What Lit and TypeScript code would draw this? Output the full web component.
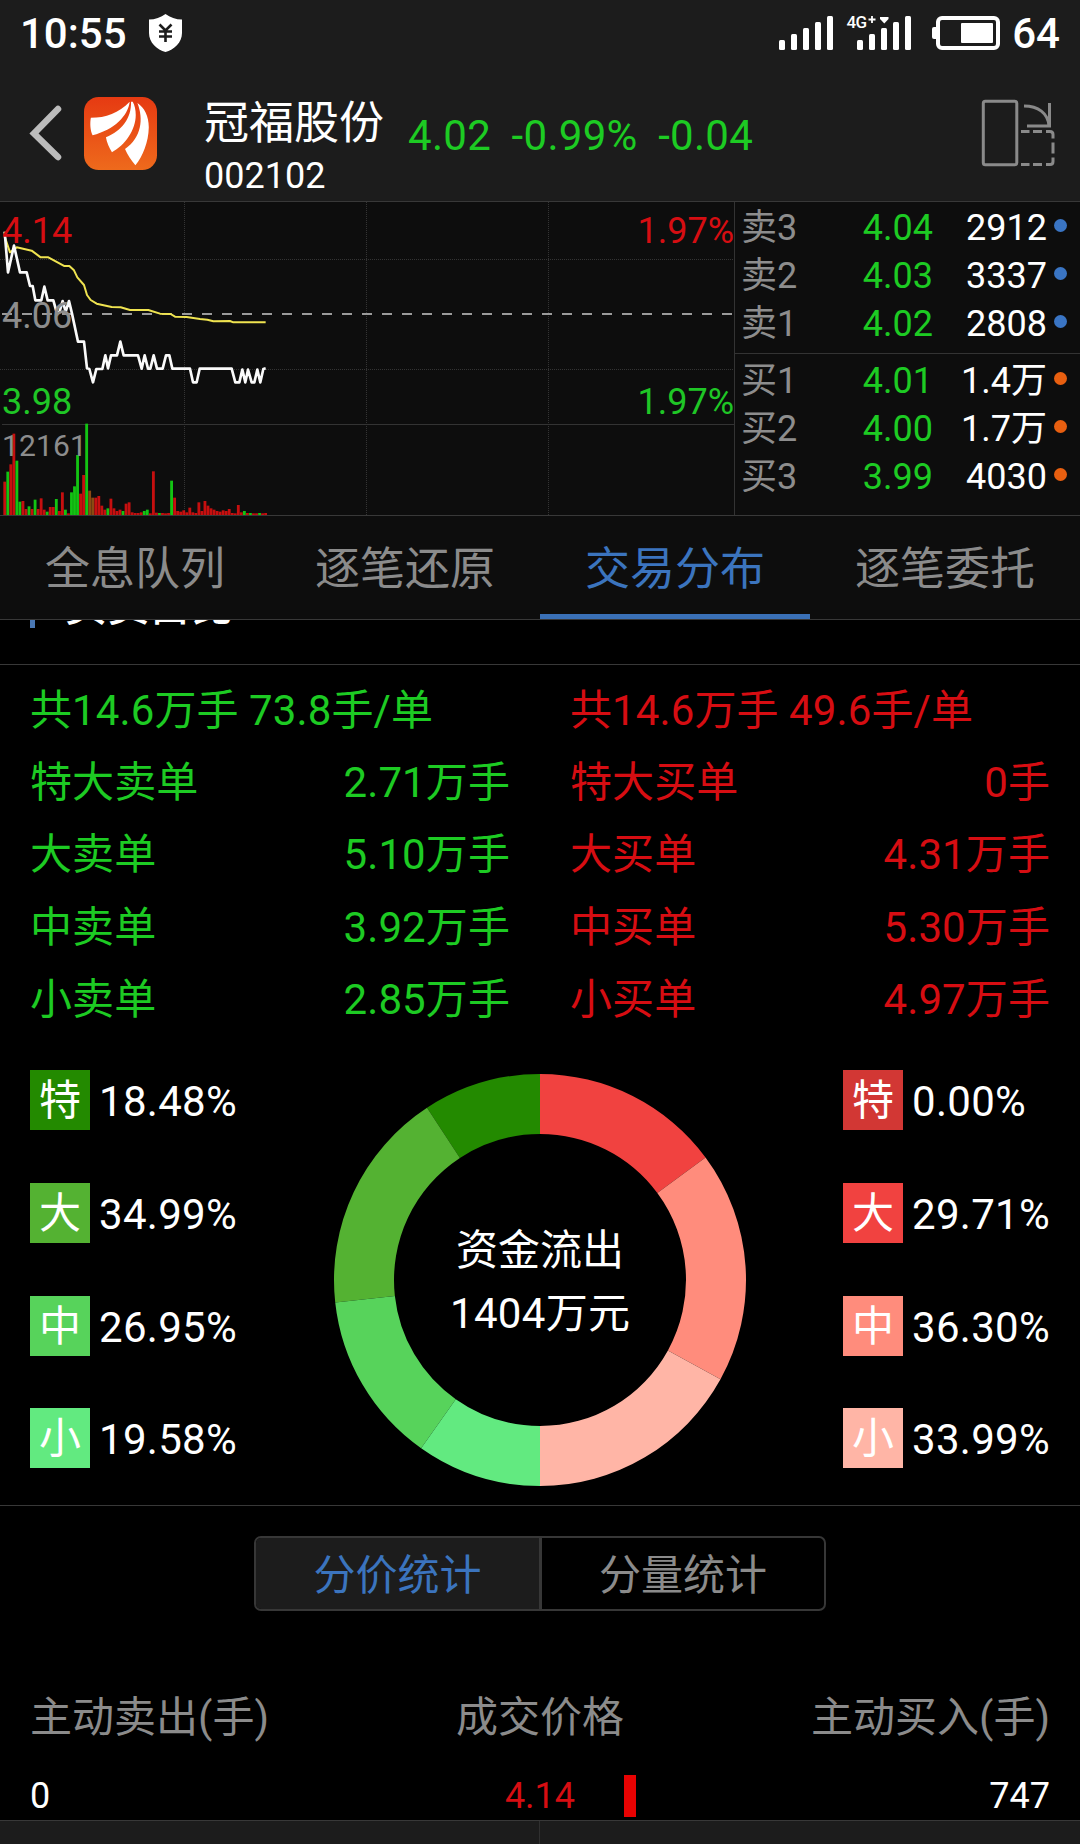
import { LitElement, html, svg, css } from "lit";
import { customElement, property } from "lit/decorators.js";
import { classMap } from "lit/directives/class-map.js";
import { styleMap } from "lit/directives/style-map.js";

const font = css`
  :host {
    display: block;
    font-family: Roboto, "Noto Sans CJK SC", sans-serif;
  }
`;

/* ---------- data ---------- */

// Chart series are in thirds of a pixel, measured from y = 195px.
const PRICE: number[][] = [
  [14, 110], [24, 232], [42, 152], [60, 232], [80, 232], [90, 273], [98, 273], [106, 316], [124, 316],
  [133, 275], [143, 316], [160, 316], [170, 352], [178, 352], [188, 318], [197, 350], [207, 318], [216, 356],
  [234, 440], [252, 440], [261, 520], [268, 522], [279, 562], [289, 522], [307, 522], [316, 481], [324, 520],
  [333, 481], [351, 481], [361, 440], [371, 481], [414, 481], [425, 521], [434, 481], [444, 521], [451, 521],
  [461, 481], [471, 521], [488, 521], [498, 481], [508, 481], [517, 521], [570, 521], [579, 562], [590, 562],
  [599, 521], [695, 521], [706, 562], [718, 562], [727, 524], [736, 562], [744, 524], [755, 562], [763, 562],
  [772, 524], [781, 562], [790, 522], [797, 520],
];

const AVERAGE: number[][] = [
  [14, 125], [30, 172], [50, 157], [95, 167], [122, 187], [145, 187], [192, 213], [208, 213], [222, 226],
  [232, 247], [252, 270], [261, 300], [272, 315], [290, 326], [335, 336], [362, 337], [390, 345], [445, 345],
  [480, 356], [512, 357], [525, 365], [560, 366], [600, 372], [622, 374], [640, 379], [690, 378], [700, 382],
  [797, 382],
];

// One bar a minute: direction letter and height.
const VOLUME =
  "r100 g130 r152 r244 g163 g40 r42 r18 g26 r18 g46 r18 r50 r16 g10 r24 r24 g48 r12 r68 g16 r5 g68 g86 g180 r64 r120 g274 m73 m52 r52 r57 r28 r16 g20 r49 r20 r12 r16 g12 r34 r38 r8 r6 r6 r8 g12 g16 r5 r131 r7 g6 r6 r5 r6 g103 r52 r12 r10 r14 r8 r22 r8 r6 r38 r12 r42 r28 r20 r16 r12 r10 r14 r12 r18 r6 r5 r30 r8 g12 r6 g6 r5 r5 g6 r5 r6".split(
    " ",
  );

const SELLS = [
  { name: "卖3", price: "4.04", count: "2912" },
  { name: "卖2", price: "4.03", count: "3337" },
  { name: "卖1", price: "4.02", count: "2808" },
];
const BUYS = [
  { name: "买1", price: "4.01", count: "1.4万" },
  { name: "买2", price: "4.00", count: "1.7万" },
  { name: "买3", price: "3.99", count: "4030" },
];

const TABS = ["全息队列", "逐笔还原", "交易分布", "逐笔委托"];

const SELL_ORDERS = [
  ["特大卖单", "2.71万手"],
  ["大卖单", "5.10万手"],
  ["中卖单", "3.92万手"],
  ["小卖单", "2.85万手"],
];
const BUY_ORDERS = [
  ["特大买单", "0手"],
  ["大买单", "4.31万手"],
  ["中买单", "5.30万手"],
  ["小买单", "4.97万手"],
];

interface Share {
  label: string;
  share: number;
  color: string;
}
const SELL_SHARES: Share[] = [
  { label: "特", share: 18.48, color: "#238a00" },
  { label: "大", share: 34.99, color: "#54b232" },
  { label: "中", share: 26.95, color: "#57d35b" },
  { label: "小", share: 19.58, color: "#62ea80" },
];
const BUY_SHARES: Share[] = [
  { label: "特", share: 0, color: "#d23734" },
  { label: "大", share: 29.71, color: "#f14240" },
  { label: "中", share: 36.3, color: "#ff8c7c" },
  { label: "小", share: 33.99, color: "#ffb5a6" },
];

/* ---------- status bar ---------- */

@customElement("status-bar")
class StatusBar extends LitElement {
  static styles = [
    font,
    css`
      .bar {
        display: flex;
        align-items: center;
        height: 66px;
        padding: 0 20px;
        color: #fff;
        font-size: 42px;
        font-weight: 500;
      }
      .clock,
      .level {
        line-height: 64px;
        padding-top: 2px;
      }
      .clock {
        width: 128px;
      }
      .icons {
        margin-left: auto;
        margin-right: 11px;
      }
      svg {
        display: block;
      }
      .net {
        font-size: 17px;
        font-weight: 500;
      }
    `,
  ];

  render() {
    const bars = (x: number) =>
      [0, 1, 2, 3, 4].map(
        (i) => svg`<rect x=${x + i * 12} y=${40 - i * 6} width="6" height=${10 + i * 6} rx="1.5"></rect>`,
      );
    return html`
      <div class="bar">
        <span class="clock">10:55</span>
        <svg width="36" height="66" viewBox="148 0 36 66">
          <path d="M165.500 14 C170 17.500 176 19.500 182 19.500 V33 C182 43 174 49.500 165.500 52 C157 49.500 149 43 149 33 V19.500 C155 19.500 161 17.500 165.500 14Z" fill="#fff"></path>
          <path d="M159.500 24.500 L165.500 30.500 L171.500 24.500 M159 31.500 H172 M159 36.500 H172 M165.500 30 V42" fill="none" stroke="#1c1c1c" stroke-width="2.600"></path>
        </svg>
        <svg class="icons" width="223" height="66" viewBox="778 0 223 66" fill="#fff">
          ${bars(779)} ${bars(857)}
          <text class="net" x="846.500" y="28" textLength="20.500">4G</text>
          <path d="M868.500 19.500 H875.500 M872 16 V23" stroke="#fff" stroke-width="1.800"></path>
          <path d="M880 17 H888.500 V19 L884.300 23.500 L880 19Z"></path>
          <rect x="938" y="18" width="60" height="30" rx="4" fill="none" stroke="#fff" stroke-width="4"></rect>
          <rect x="932" y="27" width="6" height="12" rx="2"></rect>
          <rect x="961" y="23" width="32" height="20" rx="1"></rect>
        </svg>
        <span class="level">64</span>
      </div>
    `;
  }
}

/* ---------- stock header ---------- */

@customElement("stock-header")
class StockHeader extends LitElement {
  static styles = [
    font,
    css`
      .head {
        display: flex;
        height: 135px;
        padding: 0 25px 0 28px;
        border-bottom: 1px solid #383838;
        color: #fff;
      }
      svg {
        display: block;
        flex: none;
      }
      .back {
        margin: 39px 22px 0 0;
      }
      .logo {
        margin-top: 31px;
      }
      .ident {
        width: 204px;
        padding: 31px 0 0 47px;
      }
      .name {
        font-size: 45px;
        line-height: 54px;
      }
      .code {
        font-size: 36px;
        line-height: 50px;
      }
      .quote {
        display: flex;
        gap: 20.500px;
        font-size: 42px;
        letter-spacing: 0.300px;
        line-height: 140px;
        color: #1dcb23;
      }
      .rotate {
        margin: 32px 0 0 auto;
      }
    `,
  ];

  render() {
    return html`
      <div class="head">
        <svg class="back" width="34" height="58" viewBox="28 105 34 58">
          <path d="M58 109 L34 133.500 L58 157" fill="none" stroke="#bcbcbc" stroke-width="6.500" stroke-linecap="round"></path>
        </svg>
        <svg class="logo" width="73" height="73" viewBox="192.500 36 218 218">
          <defs>
            <linearGradient id="sun" x1="0" y1="0" x2="0" y2="1">
              <stop offset="0" stop-color="#e63a12"></stop>
              <stop offset="1" stop-color="#ee6a1c"></stop>
            </linearGradient>
          </defs>
          <rect x="192.500" y="36" width="218" height="218" rx="44" fill="url(#sun)"></rect>
          <g fill="#fff">
            <path d="M213 98 C258 98 296 84 329 50 C324 92 283 134 218 150 C211 136 210 114 213 98Z"></path>
            <path d="M333 50 C334 100 306 136 258 156 C260 170 268 188 276 201 C314 181 347 136 347 90 C347 74 344 60 338 50Z"></path>
            <path d="M352 54 C371 102 364 158 315 191 C322 207 334 226 346 240 C368 212 385 172 386 126 C386 94 373 68 352 54Z"></path>
          </g>
        </svg>
        <div class="ident">
          <div class="name">冠福股份</div>
          <div class="code">002102</div>
        </div>
        <div class="quote"><span>4.02</span><span>-0.99%</span><span>-0.04</span></div>
        <svg class="rotate" width="74" height="70" viewBox="981 98 74 70" fill="none" stroke="#8a8a8a" stroke-width="3">
          <rect x="983.300" y="101.300" width="33.500" height="63.500" rx="2"></rect>
          <path d="M1024 106 C1038 106 1048 113 1049 126 M1049.500 103 V126 H1027"></path>
          <path d="M1021 131.500 h8.500 m3.500 0 h9 m4 0 h4 q3 0 3 3 v4 m0 4 v11 m0 4 v4 q0 3 -3 3 h-4 m-4 0 h-9 m-3.500 0 h-8.500"></path>
        </svg>
      </div>
    `;
  }
}

/* ---------- intraday chart ---------- */

@customElement("minute-chart")
class MinuteChart extends LitElement {
  static styles = [
    font,
    css`
      svg {
        display: block;
      }
      .label {
        font-size: 36px;
      }
      .small {
        font-size: 30px;
      }
      .right {
        text-anchor: end;
      }
      .up {
        fill: #d60d12;
      }
      .down {
        fill: #1fc626;
      }
      .flat {
        fill: #8d8d8d;
      }
    `,
  ];

  render() {
    const fills: Record<string, string> = { r: "#c60f0f", g: "#13c413", m: "#8b4a12" };
    return html`
      <svg width="734" height="313" viewBox="0 202 734 313">
        <g fill="none" stroke="#343434" stroke-dasharray="1 1">
          <path d="M184.500 202 V515 M366.500 202 V515 M548.500 202 V515"></path>
          <path d="M0 259.500 H734 M0 369.500 H734"></path>
        </g>
        <path d="M2 424.500 H734" stroke="#333"></path>
        <path d="M2 314 H734" stroke="#9a9a9a" stroke-width="2" stroke-dasharray="10 10"></path>
        <g transform="translate(0 195) scale(0.33333)">
          ${VOLUME.map((v, i) => {
            const h = Number(v.slice(1));
            return svg`<rect x=${10 + i * 9.1} y=${960 - h} width="8.500" height=${h} fill=${fills[v[0]]}></rect>`;
          })}
          <polyline points=${AVERAGE.join(" ")} fill="none" stroke="#efe350" stroke-width="6" stroke-linejoin="round"></polyline>
          <polyline points=${PRICE.join(" ")} fill="none" stroke="#fafafa" stroke-width="8" stroke-linejoin="round"></polyline>
        </g>
        <text class="label up" x="2" y="243">4.14</text>
        <text class="label flat" x="2" y="327.500">4.06</text>
        <text class="label down" x="2" y="413.500">3.98</text>
        <text class="small flat" x="2" y="455.500" textLength="84.800">12161</text>
        <text class="label up right" x="734" y="243">1.97%</text>
        <text class="label down right" x="734" y="413.500">1.97%</text>
      </svg>
    `;
  }
}

/* ---------- order book ---------- */

@customElement("order-book")
class OrderBook extends LitElement {
  static styles = [
    font,
    css`
      .book {
        height: 313px;
        border-left: 1px solid #333;
        box-sizing: border-box;
        font-size: 36px;
        line-height: 48px;
      }
      .side {
        padding-top: 2px;
      }
      .side.buy {
        padding-top: 3px;
      }
      .sell {
        height: 149px;
        border-bottom: 1px solid #333;
      }
      .row {
        display: grid;
        grid-template-columns: 90px 102px 1fr 14px;
        align-items: center;
        height: 48px;
        padding: 0 12px 0 6px;
        color: #fff;
      }
      .name {
        color: #8d8d8d;
      }
      .price {
        color: #1dcb23;
        text-align: right;
      }
      .count {
        padding-right: 7px;
        text-align: right;
      }
      .dot {
        width: 13px;
        height: 13px;
        margin-bottom: 5px;
        border-radius: 50%;
        background: #3a75c4;
      }
      .buy .dot {
        background: #e85f10;
      }
    `,
  ];

  private rows(list: typeof SELLS) {
    return list.map(
      (r) => html`
        <div class="row">
          <span class="name">${r.name}</span>
          <span class="price">${r.price}</span>
          <span class="count">${r.count}</span>
          <i class="dot"></i>
        </div>
      `,
    );
  }

  render() {
    return html`
      <div class="book">
        <div class="side sell">${this.rows(SELLS)}</div>
        <div class="side buy">${this.rows(BUYS)}</div>
      </div>
    `;
  }
}

/* ---------- fund distribution ---------- */

@customElement("fund-ring")
class FundRing extends LitElement {
  static styles = [
    font,
    css`
      svg {
        display: block;
      }
      text {
        fill: #fff;
        font-size: 42px;
        text-anchor: middle;
      }
    `,
  ];

  private arcs(shares: Share[], dir: number) {
    const outer = 206;
    const inner = 146;
    const at = (r: number, a: number) => `${210 + r * Math.sin(a)} ${210 - r * Math.cos(a)}`;
    let from = 0;
    return shares.map((s) => {
      const to = from + (s.share / 100) * Math.PI * dir;
      const out = dir > 0 ? 1 : 0;
      const d = `M${at(outer, from)} A${outer} ${outer} 0 0 ${out} ${at(outer, to)} L${at(inner, to)} A${inner} ${inner} 0 0 ${1 - out} ${at(inner, from)}Z`;
      from = to;
      return s.share ? svg`<path d=${d} fill=${s.color}></path>` : null;
    });
  }

  render() {
    return html`
      <svg width="420" height="420" viewBox="0 0 420 420">
        ${this.arcs(SELL_SHARES, -1)} ${this.arcs(BUY_SHARES, 1)}
        <text x="210" y="195">资金流出</text>
        <text x="210" y="258" textLength="180">1404万元</text>
      </svg>
    `;
  }
}

@customElement("share-legend")
class ShareLegend extends LitElement {
  @property({ attribute: false }) shares: Share[] = [];

  static styles = [
    font,
    css`
      .list {
        display: grid;
        gap: 52.800px;
        color: #fff;
        font-size: 42px;
        line-height: 62px;
      }
      .item {
        display: flex;
        gap: 9px;
        height: 60px;
      }
      .chip {
        width: 60px;
        height: 60px;
        text-align: center;
      }
      .value {
        width: 138px;
        padding-top: 1px;
        letter-spacing: 0.300px;
      }
    `,
  ];

  render() {
    return html`
      <div class="list">
        ${this.shares.map(
          (s) => html`
            <div class="item">
              <span class="chip" style=${styleMap({ background: s.color })}>${s.label}</span>
              <span class="value">${s.share.toFixed(2)}%</span>
            </div>
          `,
        )}
      </div>
    `;
  }
}

/* ---------- page ---------- */

@customElement("app-root")
class AppRoot extends LitElement {
  static styles = [
    font,
    css`
      :host {
        width: 1080px;
        height: 1844px;
        overflow: hidden;
        background: #000;
      }
      .top {
        background: #1c1c1c;
      }
      .market {
        display: grid;
        grid-template-columns: 734px 1fr;
        height: 313px;
        border-bottom: 1px solid #383838;
        background: #0d0d0d;
      }
      .tabs {
        display: grid;
        grid-template-columns: repeat(4, 1fr);
        height: 103px;
        border-bottom: 1px solid #383838;
        background: #0d0d0d;
      }
      .tab {
        box-sizing: border-box;
        height: 103px;
        border-bottom: 5px solid transparent;
        color: #8b8b8b;
        font-size: 45px;
        line-height: 108px;
        text-align: center;
      }
      .tab.on {
        border-bottom-color: #3a70b6;
        color: #3b74be;
      }
      .title {
        display: flex;
        align-items: flex-end;
        height: 44px;
        overflow: hidden;
        border-bottom: 1px solid #383838;
      }
      .mark {
        width: 5px;
        height: 34px;
        margin: 0 30px 36px 30px;
        background: #4a78b4;
      }
      .caption {
        margin-bottom: 32px;
        color: #fff;
        font-size: 42px;
        font-weight: 500;
        line-height: 50px;
      }
      .orders {
        display: grid;
        grid-template-columns: 1fr 1fr;
        height: 405px;
        padding-top: 10px;
        box-sizing: border-box;
        font-size: 42px;
        line-height: 72px;
      }
      .col {
        padding: 0 30px;
      }
      .line {
        display: flex;
        justify-content: space-between;
        height: 72.200px;
        letter-spacing: 0.100px;
      }
      .down {
        color: #1dcb23;
      }
      .up {
        color: #d60d12;
      }
      .funds {
        display: flex;
        justify-content: space-between;
        height: 435px;
        padding: 0 30px;
        border-bottom: 1px solid #383838;
      }
      .switch {
        display: grid;
        grid-template-columns: 286px 282px;
        width: 572px;
        height: 75px;
        margin: 30px auto 0;
        box-sizing: border-box;
        border: 2px solid #373737;
        border-radius: 7px;
        overflow: hidden;
      }
      .choice {
        color: #8b8b8b;
        font-size: 42px;
        line-height: 75px;
        text-align: center;
      }
      .choice.on {
        border-right: 3px solid #373737;
        background: #1c1c1c;
        color: #3b74be;
      }
      .table {
        height: 209px;
        padding: 71px 30px 0;
        box-sizing: border-box;
        overflow: hidden;
      }
      .trow {
        display: grid;
        grid-template-columns: 1fr 1fr 1fr;
        height: 72px;
        color: #8b8b8b;
        font-size: 42px;
        line-height: 72px;
      }
      .trow > :nth-child(2) {
        text-align: center;
      }
      .trow > :last-child {
        text-align: right;
      }
      .values {
        grid-template-columns: 1fr 80px 1fr;
        margin-top: 14px;
        height: 52px;
        color: #fff;
        font-size: 36px;
        line-height: 56px;
      }
      .values .up {
        color: #d60d12;
      }
      .buy {
        display: flex;
        justify-content: space-between;
      }
      .volume {
        height: 42px;
        margin: 7px 0 0 44px;
        background: #e80202;
      }
      .foot {
        display: grid;
        grid-template-columns: 540px 1fr;
        height: 23px;
        border-top: 1px solid #383838;
        background: #1c1c1c;
      }
      .cell {
        border-right: 1px solid #303030;
      }
    `,
  ];

  render() {
    const orders = (cls: string, sum: string, list: string[][]) => html`
      <div class="col ${cls}">
        <div class="line"><span>${sum}</span></div>
        ${list.map(([k, v]) => html`<div class="line"><span>${k}</span><span>${v}</span></div>`)}
      </div>
    `;
    return html`
      <header class="top">
        <status-bar></status-bar>
        <stock-header></stock-header>
      </header>
      <section class="market">
        <minute-chart></minute-chart>
        <order-book></order-book>
      </section>
      <nav class="tabs">
        ${TABS.map((t, i) => html`<div class=${classMap({ tab: true, on: i === 2 })}>${t}</div>`)}
      </nav>
      <div class="title"><i class="mark"></i><span class="caption">买卖占比</span></div>
      <section class="orders">
        ${orders("down", "共14.6万手 73.8手/单", SELL_ORDERS)} ${orders("up", "共14.6万手 49.6手/单", BUY_ORDERS)}
      </section>
      <section class="funds">
        <share-legend .shares=${SELL_SHARES}></share-legend>
        <fund-ring></fund-ring>
        <share-legend .shares=${BUY_SHARES}></share-legend>
      </section>
      <div class="switch">
        <div class="choice on">分价统计</div>
        <div class="choice">分量统计</div>
      </div>
      <section class="table">
        <div class="trow"><span>主动卖出(手)</span><span>成交价格</span><span>主动买入(手)</span></div>
        <div class="trow values">
          <span>0</span>
          <span class="up">4.14</span>
          <div class="buy"><i class="volume" style=${styleMap({ width: "12px" })}></i><span>747</span></div>
        </div>
      </section>
      <footer class="foot"><div class="cell"></div><div></div></footer>
    `;
  }
}
